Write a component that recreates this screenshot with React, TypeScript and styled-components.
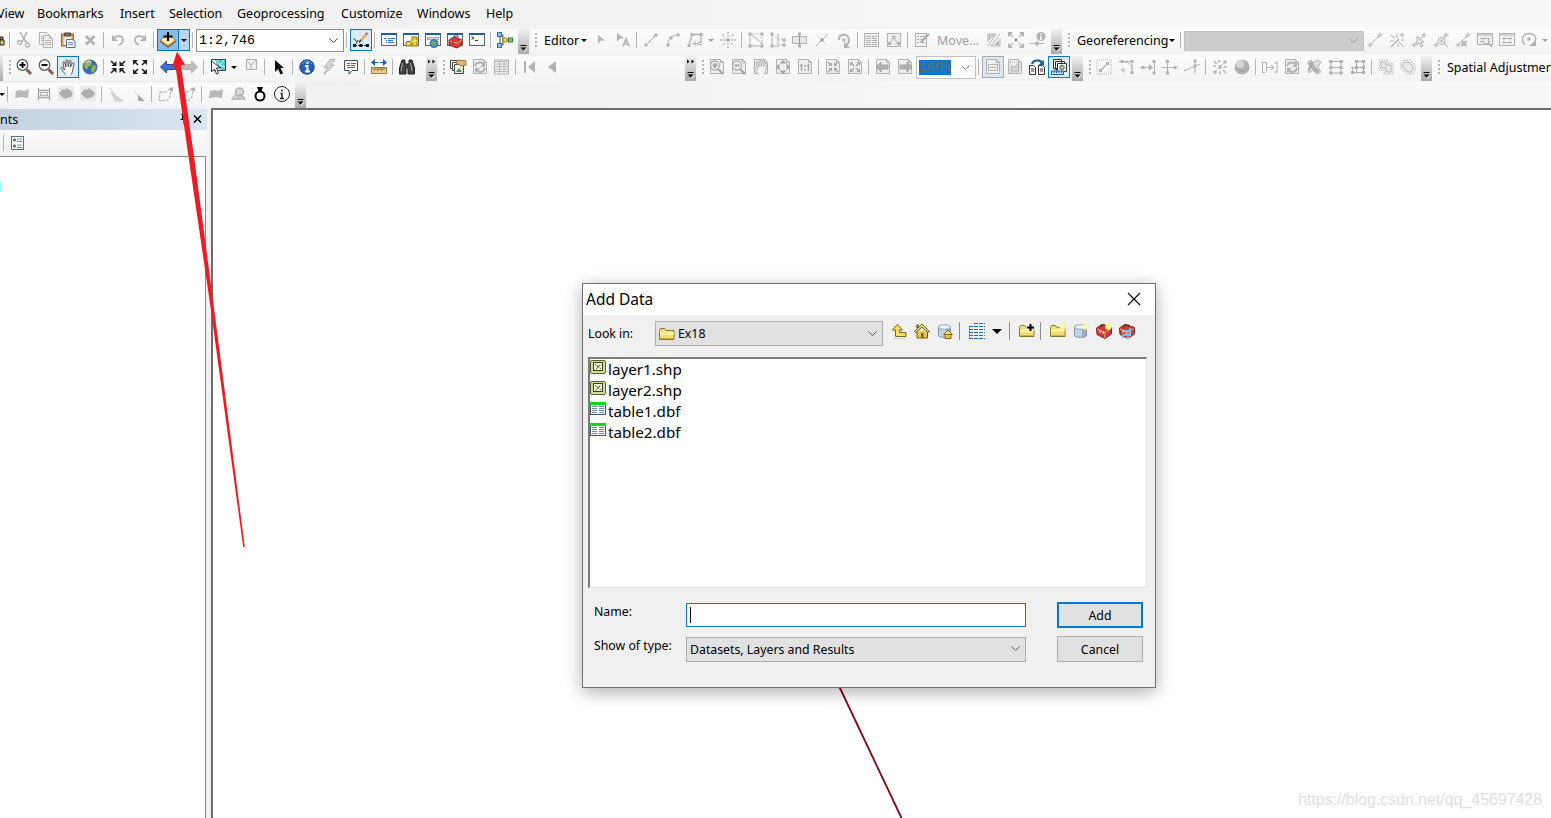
import React from 'react';
import styled, { createGlobalStyle, css } from 'styled-components';

const GlobalStyle = createGlobalStyle`
  * { box-sizing: border-box; }
  html, body { margin: 0; padding: 0; overflow: hidden; }
  body { font-family: "Noto Sans", "Open Sans", sans-serif; font-size: 12.5px; color: #000; background: #fff; }
`;

/* ---------- icons ---------- */

const G = '#b2b2b2';
const L = '#d6d6d6';
const HAND = 'M5.500 15.500L1 9.500c-.600-1.500 1-1.800 1.700-.600L4.500 11 3 4c-.200-1.500 1.300-1.700 1.600-.300L6 8V2c0-1.600 1.700-1.600 1.800 0l.500 5.500 1.200-5.300c.300-1.400 1.800-1 1.700.400L10.500 8l2.100-3.800c.700-1.200 2-.400 1.500.800L12.500 12l-1 3.500';

const cross = (x: number, y: number, c = G) => <path d={`M${x - 2.5} ${y}h5M${x} ${y - 2.5}v5`} stroke={c} />;
const node = (x: number, y: number, c = G) => <rect x={x - 1.5} y={y - 1.5} width="3" height="3" fill={c} stroke="none" />;
const page = <path d="M1.5.5h10l3 3v11h-13zM11.500.500v3h3" fill="#efefef" stroke={G} />;
const windowFrame = (
  <>
    <rect x=".5" y="1.500" width="15" height="12" fill="#fff" stroke="#5a6470" />
    <path d="M0 2h16" stroke="#1b5cae" strokeWidth="2" />
  </>
);
const links = <path d="M3.5 12.5L12.5 3.5" stroke={G} />;
const cylinder = (
  <>
    <path d="M1.500 4v8.500c0 2.500 12 2.500 12 0V4" fill="#c3d3e8" stroke="#8093aa" />
    <path d="M9 6h4v7l-4 1z" fill="#7e95b5" stroke="none" opacity=".6" />
    <ellipse cx="7.500" cy="4" rx="6" ry="2.300" fill="#edf4fb" stroke="#8da1b8" />
  </>
);
const folder = (
  <>
    <path d="M.500 13.500v-9l1-2h4l1.500 2h8v9z" fill="#f2dc7c" stroke="#8f7724" />
    <path d="M1 7h14M1 8h14" stroke="#fff5b5" />
    <path d="M1 12.500h14" stroke="#d1b047" />
  </>
);
const spark = (
  <>
    <circle cx="12.500" cy="3.500" r="3.200" fill="#fff9a8" stroke="none" />
    <path d="M12.500 0v7M9 3.500h7M10 1l5 5M15 1l-5 5" stroke="#efe25a" strokeWidth=".7" />
    <circle cx="12.500" cy="3.500" r="1.500" fill="#fff" stroke="none" />
  </>
);
const toolbox = (
  <>
    <path d="M.500 5L6 1.500l9.500 3v6.500L9 15.500l-8-4z" fill="#cc3c30" stroke="#8a211a" />
    <path d="M1 6l8 3.500 6-4M9 9.500V15" stroke="#f29a8e" />
    <path d="M5 4V2h5v2" stroke="#5b2520" />
    <path d="M4 7v3M7 8v3" stroke="#fff" />
  </>
);

const icons: Record<string, React.ReactNode> = {
  cut: <><path d="M4 0l6 10M11 0L6 10" stroke={G} strokeWidth="1.500" /><circle cx="3.500" cy="10.500" r="2" stroke={G} strokeWidth="1.300" /><circle cx="11.500" cy="13" r="2" stroke={G} strokeWidth="1.300" /><path d="M9 9l3 2" stroke={G} strokeWidth="1.500" /></>,
  copy: <><path d="M1.500.500h7l3 3v9h-10z" fill="#f1f1f1" stroke={G} /><path d="M5.500 3.500h6l3 3v9h-9zM11.500 3.500v3h3" fill="#f1f1f1" stroke={G} /><path d="M7 8.500h6M7 10.500h6M7 12.500h6M3 4.500h2M3 6.500h2M3 8.500h2" stroke={G} /></>,
  paste: <><rect x="1.500" y="2" width="12" height="12" fill="#e39c3c" stroke="#a5641a" /><rect x="3.500" y="4" width="8" height="9" fill="#f7ead6" stroke="none" /><path d="M4.500 1h6v3h-6z" fill="#777" stroke="#444" /><path d="M6.500 7.500h6l2.500 2v6H6.500z" fill="#fff" stroke="#45719f" /><path d="M8 10.500h5M8 12.500h5" stroke="#5c96cf" /></>,
  del: <path d="M4 4l8.500 8.500M12.500 4L4 12.500" stroke={G} strokeWidth="2.600" />,
  undo: <><path d="M2.500 8C5 2.500 13 3 13 8c0 2-1 3.500-4 5" stroke={G} strokeWidth="1.700" /><path d="M2 3v6h6z" fill={G} stroke="none" /></>,
  redo: <><path d="M13.500 8C11 2.500 3 3 3 8c0 2 1 3.500 4 5" stroke={G} strokeWidth="1.700" /><path d="M14 3v6H8z" fill={G} stroke="none" /></>,
  addData: <><path d="M8 3l8 5-8 6-8-6z" fill="#ffdc8a" stroke="#b78235" /><path d="M0 8v2l8 6 8-6V8l-8 6z" fill="#8c6a43" stroke="none" /><path d="M2 8l6-4 6 4-6 4z" fill="#ffebb3" stroke="none" /><path d="M8 0v9M3.500 4.500h9" stroke="#000" strokeWidth="2.200" /></>,
  editTool: <><path d="M2 13.500h12" stroke="#222" strokeDasharray="2 1" /><path d="M.500 6.500l3 2.500M3 12l2-4" stroke="#222" />{node(1.500, 13.500, '#111')}{node(8, 13.500, '#111')}{node(14.500, 13.500, '#111')}<path d="M8 8.500l5-6" stroke="#e7ad52" strokeWidth="2.500" /><path d="M13 2.500L14.500.8" stroke="#d4655c" strokeWidth="2.500" /><path d="M6 10.500l2-2.500" stroke="#333" strokeWidth="1.500" /></>,
  toc: <>{windowFrame}<path d="M3 6.500h2M7 6.500h7M5 8.500h1M7 8.500h5M5 10.500h1M7 10.500h6" stroke="#2878d4" /></>,
  catalog: <>{windowFrame}<path d="M3 10l5-1v5H3zM9 5h5v9H9z" fill="#e7cb36" stroke="#8b7616" /><path d="M4 12c3 0 5-4 10-3" stroke="#fff5a0" /></>,
  searchWin: <>{windowFrame}<rect x="2.500" y="5.500" width="11" height="2" fill="#d9e1e8" stroke="#9cacba" /><circle cx="9" cy="11.500" r="4" fill="#4d91d1" stroke="#346596" /><path d="M7 9l4 1-1 3-3-1z" fill="#6bb54a" stroke="none" /></>,
  tools: <>{windowFrame}<path d="M2 8l5-3 8 3v5l-5 3-8-3z" fill="#cf4037" stroke="#8c201a" /><path d="M3 9l7 2.500L15 8" stroke="#f2a093" /><path d="M6 9v3M7 5V4h4v2" stroke="#444" /></>,
  python: <>{windowFrame}<path d="M2.500 4.500L5 6 2.500 7.500M6 8.500h3" stroke="#333" /></>,
  model: <><path d="M3 3v10M3 3h3v5h7M3 13h3V8" stroke="#555" /><rect x=".500" y=".500" width="4" height="4" fill="#7ec4ed" stroke="#2578a9" /><rect x=".500" y="11.500" width="4" height="4" fill="#7ec4ed" stroke="#2578a9" /><circle cx="8" cy="8" r="2.200" fill="#ffdd5b" stroke="#9b771f" /><rect x="11.500" y="6" width="4" height="4" fill="#73cf68" stroke="#2d7930" /></>,
  play: <path d="M5 3l7 5.500H8L5 12z" fill={G} stroke="none" />,
  playA: <><path d="M2 1l7 5.500H5L2 10z" fill={G} stroke="none" /><path d="M8 14.500L11 7l3 7.500M9 12h4" stroke={G} strokeWidth="1.600" /></>,
  line: <>{links}{node(3, 13)}{node(13, 3)}</>,
  arc: <><path d="M3 13c0-6 3-10 10-10" stroke={G} />{node(3, 13)}{node(6, 6)}{node(13, 3)}</>,
  trace: <><path d="M2 13.500L5 2.500h9v8h-3" stroke={G} strokeWidth="1.300" />{node(5, 2.500)}{node(14, 2.500)}{node(2, 13.500)}{cross(8, 11.500)}<path d="M10 12.500h5" stroke={G} /></>,
  point: <><path d="M8 0v5M8 11v5M0 8h5M11 8h5M2.500 2.500L5 5M11 11l2.500 2.500M13.500 2.500L11 5M5 11l-2.500 2.500" stroke={G} strokeWidth="1.300" strokeDasharray="2 1" />{node(8, 8, '#999')}</>,
  verts: <><path d="M2 2l12 9v3H2z" stroke={G} /><path d="M2 2h12v12" stroke={G} strokeDasharray="1 1" />{node(2, 2)}{node(14, 2)}{node(2, 14)}{node(14, 14)}</>,
  reshape: <><path d="M2 2l6 5h6v6H8" stroke={G} strokeDasharray="1 1" /><path d="M2 2v12h5M8 2v13" stroke={G} />{node(2, 2)}{node(2, 14)}{node(14, 8)}{node(14, 13)}</>,
  cutPoly: <><rect x=".500" y="4.500" width="14" height="7" fill="#e6e6e6" stroke={G} /><path d="M7.500 1v14" stroke="#999" />{node(7.500, 2)}{node(7.500, 14)}</>,
  split: <><path d="M2 14L14 2" stroke={G} /><path d="M3 3l10 10" stroke={L} strokeDasharray="2 1" />{node(8, 8, '#999')}</>,
  rotate: <><path d="M3 8c-1-7 10-7 10 0 0 3-2 5-4 6" stroke={G} strokeWidth="2" /><path d="M8 10v6h6z" fill={G} stroke="none" />{node(8, 8)}</>,
  attrs: <><rect x=".500" y="1.500" width="14" height="13" fill="#efefef" stroke={G} /><path d="M2 4.500h5M2 6.500h5M2 8.500h5M2 10.500h5M2 12.500h5M8 4.500h5M8 6.500h5M8 8.500h5M8 10.500h5M8 12.500h5" stroke={G} /></>,
  sketchProps: <><rect x="1.500" y="1.500" width="13" height="13" fill="#efefef" stroke={G} /><path d="M3.500 12l4-7 4.500 7" stroke={G} />{node(8, 5)}{node(3.500, 11.500)}{node(12.500, 11.500)}</>,
  create: <><rect x="1.500" y="1.500" width="11" height="13" fill="#efefef" stroke={G} /><path d="M3 4.500h2M6 4.500h5M3 7.500h2M6 7.500h5M3 10.500h2M6 10.500h5" stroke={G} /><path d="M7 10l8-8" stroke="#a6a6a6" strokeWidth="2" /></>,
  adjust: <><path d="M2 10V2h8L2 14M14 6v8H5L14 2" stroke={G} /><path d="M3 3h5L3 8z" fill={L} stroke={G} /><path d="M13 8v5H8z" fill={G} stroke="none" /></>,
  expand: <><path d="M1 1l4 4M15 1l-4 4M1 15l4-4M15 15l-4-4" stroke={G} strokeWidth="1.300" /><path d="M0 5V0h5zM11 0h5v5zM16 11v5h-5zM5 16H0v-5z" fill={G} />{node(8, 8, '#999')}</>,
  infoNode: <><path d="M0 11.500h14M7 9v6" stroke={G} />{node(7, 11.500)}<circle cx="11" cy="4.500" r="4.500" fill={G} stroke="none" /><path d="M11 1.500V3M11 4v4" stroke="#fff" strokeWidth="1.500" /></>,
  zoomIn: <><circle cx="6.500" cy="6" r="5.300" fill="#f6fafc" stroke="#555" strokeWidth="1.200" /><path d="M3.500 6h6M6.500 3v6" stroke="#111" strokeWidth="2" /><path d="M10.500 10.500l4.500 4.500" stroke="#93544c" strokeWidth="2.800" /></>,
  zoomOut: <><circle cx="6.500" cy="6" r="5.300" fill="#f6fafc" stroke="#555" strokeWidth="1.200" /><path d="M3.500 6h6" stroke="#111" strokeWidth="2" /><path d="M10.500 10.500l4.500 4.500" stroke="#93544c" strokeWidth="2.800" /></>,
  hand: <path d={HAND} fill="#fff" stroke="#444" strokeWidth=".9" />,
  globe: <><circle cx="8" cy="8" r="7" fill="#2f6fbd" stroke="#44688e" /><path d="M3 3l4-2 3 2-1 4-3 1-1 3-3-3zM11 6l3 1-1 5-3 2-1-4z" fill="#98b443" stroke="none" /><path d="M4 4c1-2 4-2 5-1" stroke="#e0f0f8" /></>,
  fixedIn: <><path d="M1 2l3 3M15 2l-3 3M1 14l3-3M15 14l-3-3" stroke="#222" strokeWidth="1.600" /><path d="M6.500 2v5h-5zM9.500 2v5h5zM6.500 14V9h-5zM9.500 14V9h5z" fill="#222" stroke="none" /></>,
  fixedOut: <><path d="M3 3l3 3M13 3l-3 3M3 13l3-3M13 13l-3-3" stroke="#222" strokeWidth="1.600" /><path d="M1 6V1h5zM15 6V1h-5zM1 10v5h5zM15 10v5h-5z" fill="#222" stroke="none" /></>,
  back: <path d="M.5 8l6-6v3.500h9v5h-9V14z" fill="#3d74d2" stroke="#2449a1" />,
  forward: <path d="M15.500 8l-6-6v3.500h-9v5h9V14z" fill="#bdbdbd" stroke="#b0b0b0" />,
  selectF: <><rect x="1.500" y=".500" width="14" height="11" fill="#fff" stroke="#444" /><path d="M5 1h10v10h-4L7 6z" fill="#49cae0" stroke="none" /><path d="M7 1l3 5 5 2M10 6l4-5" stroke="#fff" /><path d="M1.500 2v11l3-3 2 5 2-1-2-5h4z" fill="#fff" stroke="#333" /></>,
  clearF: <><rect x="3.500" y=".500" width="10" height="10" fill="#eee" stroke={G} /><path d="M4 2l4 4 5-5M8 6v4" stroke={G} /></>,
  pointer: <path d="M4 1v12l3-3 2.500 5.500 2.500-1L9.500 9H13z" fill="#111" stroke="none" />,
  info: <><circle cx="8" cy="8" r="7.200" fill="#2462b4" stroke="#183f80" /><path d="M3 5c2-4 8-4 10 0" stroke="#6aa0e2" /><path d="M8.500 3v2M6 7h2.500v5M6 12.500h5" stroke="#fff" strokeWidth="2" /></>,
  flash: <path d="M9 .500h5L9.500 6H13L3 15.500 6.500 8.500H3z" fill="#d5d5d5" stroke={G} />,
  popup: <><path d="M1.500 1.500h13v10H9L6 15v-3.500H1.500z" fill="#fff" stroke="#45545c" /><path d="M4 4.500h3M4 6.500h3M8 4.500h5M8 6.500h4M4 8.500h8" stroke="#267bc5" /></>,
  measure: <><path d="M1 3.500h6M9 3.500h6" stroke="#1f60b0" /><path d="M0 3.500L4 0v7zM16 3.500L12 0v7z" fill="#1f60b0" stroke="none" /><rect x=".500" y="8.500" width="15" height="6" fill="#edcc8f" stroke="#a57639" /><path d="M3 9v3M5 9v2M7 9v3M9 9v2M11 9v3M13 9v2" stroke="#89602b" /></>,
  find: <><path d="M3 1h3v4h4V1h3l2.500 8v6H9V9H7v6H.5V9z" fill="#444" stroke="#222" /><path d="M3.500 4L2 12M11.500 4l1.500 8" stroke="#aaa" /></>,
  stack: <><path d="M.500 1.500h8v8h-8z" fill="#fff" stroke="#444" /><path d="M2.500 3.500h9v8h-9z" fill="#fff" stroke="#444" /><path d="M4.500 5.500h9v9h-9z" fill="#ecf6e4" stroke="#444" /><path d="M6 13l3-4 3 4z" fill="#578b45" stroke="none" /><path d="M6 2.500L9 1l7 1v4l-4 1-5-2z" fill="#e4b66b" stroke="#967443" /></>,
  refresh: <>{page}<path d="M3 7c1-4 7-5 9-1M13 9c-1 5-7 5-9 1" stroke={G} strokeWidth="2" /><path d="M13 3v5H8zM3 14V9h5z" fill={G} stroke="none" /></>,
  table: <><rect x=".500" y="1" width="14" height="14" fill="#f2f2f2" stroke={G} /><path d="M1 2.500h13M1 5h13M1 7.500h13M1 10h13M1 12.500h13M5.500 2v12M10 2v12" stroke={G} strokeWidth=".9" /></>,
  first: <><path d="M3 2v12" stroke={G} strokeWidth="2" /><path d="M13 2v12L6 8z" fill={G} stroke="none" /></>,
  prev: <path d="M12 2v12L4 8z" fill={G} stroke="none" />,
  pageIn: <>{page}<circle cx="6" cy="6.500" r="4.500" fill="#eee" stroke={G} strokeWidth="1.300" /><path d="M3.500 6.500h5M6 4v5M9 10l5 5" stroke="#a2a2a2" strokeWidth="1.900" /></>,
  pageOut: <>{page}<circle cx="6" cy="6.500" r="4.500" fill="#eee" stroke={G} strokeWidth="1.300" /><path d="M3.500 6.500h5M9 10l5 5" stroke="#a2a2a2" strokeWidth="1.900" /></>,
  pageHand: <>{page}<path d={HAND} fill="#f3f3f3" stroke={G} /></>,
  pageFull: <>{page}<path d="M8 1l3.500 3.500h-7zM8 15l3.500-3.500h-7zM1 8l3.500-3.500v7zM15 8l-3.500-3.500v7z" fill="#a4a4a4" stroke="none" /></>,
  page11: <>{page}<path d="M4.500 5v7M11.500 5v7M3 6.500l1.500-1M10 6.500l1.500-1" stroke="#a4a4a4" strokeWidth="1.500" /><path d="M8 6v2M8 10v2" stroke="#a4a4a4" strokeWidth="1.500" /></>,
  pageFixIn: <>{page}<path d="M3 3l3 3M13 3l-3 3M3 13l3-3M13 13l-3-3" stroke="#a4a4a4" strokeWidth="1.300" /><path d="M7 3.500V7H3.500zM9 3.500V7h3.500zM7 12.500V9H3.500zM9 12.500V9h3.500z" fill="#a4a4a4" stroke="none" /></>,
  pageFixOut: <>{page}<path d="M4 4l3 3M12 4L9 7M4 12l3-3M12 12L9 9" stroke="#a4a4a4" strokeWidth="1.300" /><path d="M3 7V3.500h3.500zM13 7V3.500H9.500zM3 9.500V13h3.500zM13 9.500V13H9.500z" fill="#a4a4a4" stroke="none" /></>,
  pageBack: <>{page}<path d="M1 8l5-5v3h7v4H6v3z" fill={G} stroke="#a4a4a4" /></>,
  pageFwd: <>{page}<path d="M15 8l-5-5v3H3v4h7v3z" fill={G} stroke="#a4a4a4" /></>,
  draft: <>{page}<rect x="3.500" y="5.500" width="9" height="6" stroke={G} /><path d="M5 8.500h6" stroke={G} /></>,
  focus: <>{page}<path d="M3 3h10M3 13h10M3 3v10M13 3v10" stroke={G} strokeDasharray="1 1" /><path d="M4.500 12V7l3 1 4-4v8z" fill={L} stroke={G} /></>,
  change: <><path d="M.500 6.500h4l2 2v7h-6zM9.500 6.500h4l2 2v7h-6z" fill="#fff" stroke="#333" /><path d="M2 10h3M2 12h3M11 10h3M11 12h3" stroke="#333" /><path d="M3 5c1-4 8-5 10-1" stroke="#1d63a4" strokeWidth="2.200" /><path d="M15 1v5.500H9z" fill="#1d63a4" stroke="none" /></>,
  ddp: <><path d="M2.500.500h8v9h-8zM4.500 2.500h9v8h-9z" fill="#fff" stroke="#333" /><path d="M6.500 4.500h9v8h-9z" fill="#fff" stroke="#333" /><circle cx="11" cy="8.500" r="2.300" fill="#a4c88d" stroke="#526f45" /><path d="M.500 12h12v3.500H.500z" fill="#d2e9ff" stroke="#1c5ca3" /><path d="M3 12v2M5.500 12v2M8 12v2M10.500 12v2" stroke="#1c5ca3" /></>,
  geo1: <>{links}{cross(3, 13)}{cross(13, 3)}</>,
  geo2: <>{cross(13, 3)}<path d="M2 15l8-8" stroke={G} strokeWidth="1.500" /><path d="M8 2v4M2 3l4 4M1 9h4M10 10l5 5M9 11v4M12 8h3" stroke={G} /></>,
  geo3: <>{links}{cross(3, 13)}{cross(13, 3)}<path d="M6 4v9l2-2 2 4 2-1-2-4h3z" fill="#e4e4e4" stroke={G} /></>,
  geo4: <>{links}{cross(3, 13)}{cross(13, 3)}<circle cx="8.500" cy="9" r="3.500" fill="#eee" stroke={G} /><path d="M7 9h3M8.500 7.500v3M11 11l4 4" stroke={G} /></>,
  geo5: <>{links}{cross(3, 13)}{cross(13, 3)}<path d="M6.500 9l5 5M11.500 9l-5 5" stroke={G} strokeWidth="2" /></>,
  geo6: <><rect x=".500" y="1.500" width="15" height="11" fill="#eee" stroke={G} /><path d="M1 3h14M3 6.500h10M3 9.500h10" stroke={G} /><circle cx="9" cy="9" r="3" fill="#eee" stroke={G} /><path d="M11 11l4 4" stroke={G} strokeWidth="1.700" /></>,
  geo7: <><rect x=".500" y="1.500" width="15" height="12" fill="#f4f4f4" stroke={G} /><path d="M1 3h14M3 6.500h10M3 10.500h10M5 5v3M11 5v3M5 9v3M11 9v3" stroke={G} /></>,
  geo8: <><path d="M4 13C-1 8 2 1.500 8 1.500s9 6 4 10.500" stroke={G} strokeWidth="1.500" /><path d="M8 14h7V8z" fill={G} stroke="none" />{node(8, 7)}</>,
  sa1: <><rect x="1" y="1" width="14" height="14" stroke={G} strokeDasharray="1 1" /><path d="M5 11l6-6" stroke={G} strokeWidth="1.300" />{node(4.500, 11.500)}{node(11.500, 4.500)}</>,
  sa2: <><path d="M1 2.500h13v11M4 2.500c6 0 10 3 10 8" stroke={G} />{node(4, 2.500)}{node(14, 2.500)}{node(14, 13.500)}{cross(5, 11)}</>,
  sa3: <><path d="M0 8.500h12M14.500 2v12" stroke={G} /><path d="M9 5l4 3.500L9 12z" fill={G} stroke="none" />{node(3, 8.500)}{node(14, 2.500)}{node(14, 14)}</>,
  sa4: <><path d="M0 8.500h7M9 8.500h7" stroke={G} strokeDasharray="2 1" /><path d="M5.500 1v14M2 8.500h7" stroke={G} />{node(5.500, 2.500)}{node(5.500, 14)}{node(13, 8.500)}</>,
  sa5: <><path d="M0 12l16-7M11 1v14" stroke={G} />{node(11, 7)}{node(11, 2)}</>,
  sa6: <><path d="M3 13L13 3" stroke={G} strokeDasharray="3 1" /><path d="M2 2l3 3M7 1v3M1 7h3M11 11l3 3M8 12v3M12 8h3" stroke={G} strokeWidth="1.500" />{node(3, 13)}{node(8, 8)}{node(13, 3)}</>,
  ball: <><circle cx="8" cy="8" r="7.500" fill={G} stroke="none" /><circle cx="6" cy="5" r="4" fill="#d5d5d5" stroke="none" /><path d="M2 9c4 4 9 4 13 0" stroke="#999" /></>,
  sa7: <path d="M.500 13V3.500h4v9M0 13.500h3M6 8.500h5M9 6l3 2.500L9 11M15 2v12M12 4h3M12 13h3" stroke={G} />,
  sa8: <><path d="M2 3l3-2 2 3 4-3 4 2-3 5 3 5-4 2-4-4-4 3-1-4 2-3z" fill="#dedede" stroke={G} /><path d="M2 4l9 10M4 3l9 10M7 3l-4 8" stroke="#a1a1a1" strokeWidth="1.500" /></>,
  sa9: <><path d="M3 2v12M13 2v12M1 2.500h14M1 8.500h14M1 14h14" stroke={G} />{node(3, 2.500)}{node(13, 2.500)}{node(3, 8.500)}{node(13, 8.500)}{node(3, 14)}{node(13, 14)}</>,
  sa10: <><path d="M6.500 2v13M13.500 2v13M1 8.500h14M1 13.500h14M6 2.500h8M2.500 8v6" stroke={G} />{node(6.500, 2.500)}{node(13.500, 2.500)}{node(6.500, 8.500)}{node(13.500, 8.500)}{node(2.500, 13.500)}{node(13.500, 13.500)}</>,
  union: <><path d="M1 1h9v3h5v11H6v-4H1z" stroke={G} strokeDasharray="1.500 1" /><path d="M3 3h5v3h5v7H8V9H3z" fill="#eaeaea" stroke={G} /></>,
  buffer: <><path d="M4 1h6l5 5v6l-3 3H7L1 10V4z" stroke={G} strokeDasharray="1.500 1" /><path d="M5 3h4l4 4v4l-2 2H8L3 9V5z" fill="#e8e8e8" stroke={G} /></>,
  blob: <path d="M2 5l5-1 3 1 5-2-1 9-6-1-7 1z" fill="#b8b8b8" stroke="none" />,
  ladder: <><path d="M2.500 2v12M13.500 2v12M2 4.500h12M2 11.500h12" stroke="#a6a6a6" strokeWidth="1.300" /><rect x="4.500" y="6.500" width="7" height="3" fill="#eee" stroke={G} /></>,
  disc: <><rect x="0" y="0" width="16" height="15" fill="#eaeaea" stroke="none" /><path d="M1 7.500l3-4h4V2l4 2 3 3-2 4-4 1-1 1-4-2z" fill="#b0b0b0" stroke="none" /></>,
  tri1: <><path d="M3 6l12 9H7z" fill={L} stroke={G} strokeWidth=".5" /><path d="M1 2l7 7" stroke={L} /></>,
  tri2: <path d="M1 2l14 13H8V9z" fill="#aaa" stroke="none" />,
  poly1: <><path d="M2 6h6l5-4-1 9-3 3.500H1.500z" stroke="#a9a9a9" strokeDasharray="3 1" /><path d="M15 1v5l-5-3z" fill={G} stroke="none" /></>,
  loupe: <><path d="M1 13h11M5 9l-3 4h10z" fill={L} stroke={G} /><circle cx="9.500" cy="6" r="4" fill={L} stroke={G} strokeWidth="1.500" /><path d="M10 8l5 6" stroke={G} strokeWidth="2" /></>,
  ring: <><circle cx="8" cy="10" r="4.500" stroke="#000" strokeWidth="2" /><path d="M5 1h6L9.500 5h-3z" fill="#000" stroke="none" /></>,
  infoO: <><circle cx="8" cy="8" r="7.500" fill="#fff" stroke="#223" /><path d="M8 3.500v2M6.500 7.500H8v5M6 12.500h4" stroke="#223" strokeWidth="1.500" /></>,
  options: <><rect x="1.500" y="1.500" width="12" height="13" fill="#fff" stroke="#53708d" /><circle cx="4.500" cy="5" r="1" stroke="#222" /><circle cx="4.500" cy="11" r="1" stroke="#222" /><path d="M7 4h5M7 6.500h5M7 10h5M7 12.500h5" stroke="#6e8fae" /></>,
  sliver: <g transform="translate(4 0)"><path d="M0 5h3v3H0z" fill="#82995b" stroke="#222" /><path d="M0 8h4v5H0z" fill="#dfc26e" stroke="#222" /></g>,
  up: <><path d="M6.500 1.500L1.500 7h3v6.500H15v-4H8.500V7h3z" fill="#f3de63" stroke="#7a6512" /><path d="M3 15.500h12" stroke="#d3d3d3" /></>,
  home: <><path d="M3 8v7h10.500V8" fill="#e6c84c" stroke="#705a18" /><path d="M3.500 5V1.500" stroke="#75551c" strokeWidth="2.200" /><path d="M.500 8.500L8 1l7.500 7.500-1.500 1-6-5.500-6 5.500z" fill="#f3dd70" stroke="#705a18" /><path d="M7 10h2.500v5H7z" fill="#806624" stroke="none" /></>,
  homeDb: <>{cylinder}<path d="M8 11v4.500h6V11" fill="#e7c64a" stroke="#8a681c" /><path d="M6.500 11.500L11 7l4.500 4.500z" fill="#f5da66" stroke="#8a681c" /></>,
  list: <><path d="M5 .500h11M0 3.500h16M0 6.500h16M0 9.500h16M0 12.500h16M0 15.500h16" stroke="#1769bd" strokeDasharray="4 1" /><path d="M0 5h1M0 8h1M0 11h1M0 14h1" stroke="#222" /></>,
  connect: <>{folder}<path d="M7 0h9v7H7z" fill="#f0f0f0" opacity=".7" /><path d="M11.500 1v7M8 4.500h7" stroke="#000" strokeWidth="2" /></>,
  folder,
  newFolder: <>{folder}{spark}</>,
  newDb: <>{cylinder}{spark}</>,
  newTbx: <>{toolbox}{spark}</>,
  pyTbx: <>{toolbox}<path d="M5 8h6V5M4 15v-3h7V8M7 15h4" stroke="#78bcf0" strokeWidth="2.200" /></>,
  shp: <><rect x=".500" y=".500" width="15" height="13" rx="1.500" fill="#cedf97" stroke="#55652e" /><rect x="3.500" y="2.500" width="9" height="8" fill="#f5f7dc" stroke="#38401f" /><path d="M5 4.500l3 2 3-2M8 6.500l-2 3M8 6.500l3 2.500" stroke="#38401f" strokeDasharray="1.500 .7" /></>,
  dbf: <><rect x=".500" y=".500" width="15" height="12" fill="#fff" stroke="#3e5a68" /><path d="M0 1.500h16" stroke="#05dd18" strokeWidth="3" /><path d="M2 4.500h5M2 6.500h5M2 8.500h5M2 10.500h5M9 4.500h5M9 6.500h5M9 8.500h5M9 10.500h5" stroke="#6b8aa5" /></>,
};

const Glyph = styled.svg`
  width: 16px;
  height: 16px;
  flex: none;
  display: block;
  overflow: visible;
`;
const Icon = ({ name }: { name: string }) => (
  <Glyph viewBox="0 0 16 16" fill="none">{icons[name]}</Glyph>
);

/* ---------- window chrome ---------- */

const Screen = styled.div`
  position: relative;
  width: 1551px;
  height: 818px;
  overflow: hidden;
  display: flex;
  flex-direction: column;
  background: linear-gradient(90deg, #f0f0f0 0, #f2f2f2 600px, #f8f8f8 1100px);
`;
const MenuBar = styled.nav`
  height: 28px;
  display: flex;
  margin-left: -3px;
  padding-bottom: 1px;
`;
const MenuItem = styled.span<{ $w: number }>`
  width: ${p => p.$w}px;
  flex: none;
  line-height: 27px;
  white-space: nowrap;
`;
const ToolRow = styled.div`
  height: 27px;
  display: flex;
  padding-top: 1px;
`;
const Toolbar = styled.div<{ $w?: number }>`
  height: 25px;
  display: flex;
  align-items: center;
  flex: none;
  margin-right: 2px;
  padding-bottom: 3px;
  border-radius: 3px 0 0 3px;
  background: linear-gradient(#fcfcfc, #f3f3f3);
  ${p => p.$w && css`width: ${p.$w}px;`}
`;
const Slot = styled.span<{ $w?: number; $on?: 'light' | 'dim' }>`
  width: ${p => p.$w ?? 22}px;
  height: 22px;
  flex: none;
  display: flex;
  align-items: center;
  justify-content: center;
  ${p => p.$on === 'light' && css`background: #dcebf8; border: 1px solid #0078d7;`}
  ${p => p.$on === 'dim' && css`background: #dfe7ee; border: 1px solid #a0adb8;`}
`;
const EdgeOverflow = styled.i`
  width: 3px;
  height: 25px;
  flex: none;
  align-self: flex-start;
  background: linear-gradient(#ededed, #a9a9a9);
`;
const Separator = styled.i`
  width: 1px;
  height: 16px;
  margin: 0 3px 0 2px;
  flex: none;
  background: #b5b5b5;
`;
const Grip = styled.i<{ $w?: number; $x?: number }>`
  width: ${p => p.$w ?? 8}px;
  height: 14px;
  flex: none;
  background: repeating-linear-gradient(#b4b4b4 0 2px, transparent 2px 4px) ${p => p.$x ?? 4}px 0 / 2px 100% no-repeat;
`;
const Caret = styled.i<{ $dim?: boolean; $w?: number }>`
  width: ${p => p.$w ?? 11}px;
  flex: none;
  display: flex;
  justify-content: center;
  &::after {
    content: '';
    margin-left: -1px;
    border: solid transparent;
    border-width: 3px 3px 0;
    border-top-color: ${p => (p.$dim ? '#a0a0a0' : '#000')};
  }
`;
const OverflowBox = styled.span`
  width: 11px;
  height: 25px;
  flex: none;
  align-self: flex-start;
  margin-left: auto;
  background: linear-gradient(#f0f0f0, #a9a9a9);
  svg { display: block; }
`;
const Overflow = ({ more }: { more?: boolean }) => (
  <OverflowBox>
    <svg width="11" height="25" viewBox="0 0 11 25">
      {more && <path d="M2 3.500l2.500 2L2 7.500zM6.500 3.500l2.500 2-2.500 2z" />}
      <path d="M2.500 16.500h6" stroke="#000" />
      <path d="M2.500 18.500h6l-3 3z" />
      <path d="M6 22l3-3v1l-3 3z" fill="#fff" />
    </svg>
  </OverflowBox>
);
const SplitButton = styled.span`
  width: 33px;
  height: 22px;
  flex: none;
  display: flex;
  align-items: center;
  border: 1px solid #0078d7;
  background: #85bce9;
`;
const SplitArrow = styled.span`
  align-self: stretch;
  display: flex;
  align-items: center;
  border-left: 1px solid #0078d7;
  background: #b3d7f3;
`;
const Combo = styled.span<{ $w: number; $tone?: 'pale' | 'dim' }>`
  width: ${p => p.$w}px;
  height: ${p => (p.$tone === 'dim' ? 20 : 23)}px;
  margin-bottom: -1px;
  flex: none;
  display: flex;
  align-items: center;
  padding: 0 5px 0 2px;
  border: 1px solid ${p => (p.$tone ? '#c3c3c3' : '#8d8d8d')};
  background: ${p => (p.$tone === 'dim' ? '#cccccc' : '#fff')};
  font: 13.33px/15px "Liberation Mono", monospace;
`;
const Selected = styled.span`
  background: #0078d7;
  color: #7b6a58;
`;
const ChevronGlyph = styled.svg`
  width: 9px;
  height: 6px;
  margin-left: auto;
`;
const Chevron = ({ c = '#555' }: { c?: string }) => (
  <ChevronGlyph viewBox="0 0 9 6">
    <path d="M.5.5l4 4 4-4" fill="none" stroke={c} />
  </ChevronGlyph>
);
const ToolText = styled.span<{ $w: number; $dim?: boolean }>`
  width: ${p => p.$w}px;
  flex: none;
  white-space: nowrap;
  padding-left: ${p => (p.$dim ? 4 : 0)}px;
  color: ${p => (p.$dim ? '#a0a0a0' : '#000')};
`;

const Tools = ({ names }: { names: string }) => (
  <>
    {names.split(' ').map((n, i) => {
      if (n === '|') return <Separator key={i} />;
      if (n === 'v' || n === 'w') return <Caret key={i} $dim={n === 'w'} />;
      return <Slot key={i}><Icon name={n} /></Slot>;
    })}
  </>
);

/* ---------- workspace ---------- */

const Workspace = styled.main`
  flex: 1;
  display: flex;
  min-height: 0;
`;
const Contents = styled.aside`
  width: 207px;
  margin-right: 4px;
  display: flex;
  flex-direction: column;
`;
const ContentsTitle = styled.header`
  height: 21px;
  display: flex;
  align-items: center;
  justify-content: space-between;
  padding-right: 4px;
  background: linear-gradient(90deg, #c4d2df, #d9e5f2);
`;
const TitleText = styled.span`
  margin-left: -7px;
`;
const ContentsTools = styled.div`
  height: 26px;
  display: flex;
  align-items: center;
  padding-left: 1px;
  background: linear-gradient(#fafafa, #f1f1f1);
`;
const Tree = styled.div`
  flex: 1;
  padding-top: 25px;
  border: solid #888;
  border-width: 1px 1px 0 0;
  margin-right: 1px;
  background: #fff;
`;
const LayerMark = styled.i`
  display: block;
  width: 1px;
  height: 10px;
  background: #8ff;
`;
const MapView = styled.section`
  position: relative;
  flex: 1;
  margin-top: -1px;
  border: solid #6d6d6d;
  border-width: 2px 0 0 2px;
  background: #fff;
`;
const Overlay = styled.svg`
  position: absolute;
  left: 0;
  top: 0;
  width: 1551px;
  height: 818px;
`;
const Watermark = styled.span`
  position: absolute;
  right: 9px;
  bottom: 9px;
  font: 15.9px/19px "Liberation Sans", sans-serif;
  color: #dedede;
`;

/* ---------- dialog ---------- */

const Dialog = styled.section`
  position: absolute;
  left: 582px;
  top: 283px;
  width: 574px;
  height: 405px;
  display: flex;
  flex-direction: column;
  border: 1px solid #707070;
  background: #f0f0f0;
  box-shadow: 0 4px 16px rgba(0, 0, 0, .32);
  font-size: 12.3px;
`;
const DialogTitle = styled.header`
  height: 31px;
  display: flex;
  align-items: center;
  justify-content: space-between;
  padding: 0 14px 2px 3px;
  background: #fff;
  font-size: 15.5px;
`;
const LookRow = styled.div`
  height: 42px;
  display: flex;
  padding: 6px 0 0 5px;
`;
const Label = styled.label<{ $w: number; $top: number }>`
  width: ${p => p.$w}px;
  padding-top: ${p => p.$top}px;
  flex: none;
  align-self: start;
  line-height: 17px;
  white-space: nowrap;
`;
const Select = styled.span<{ $w: number }>`
  width: ${p => p.$w}px;
  height: 25px;
  flex: none;
  display: flex;
  align-items: center;
  gap: 3px;
  padding: 0 5px 0 3px;
  border: 1px solid #adadad;
  background: #e1e1e1;
`;
const DialogTools = styled.div`
  height: 22px;
  display: flex;
  align-items: center;
  margin: -1px 0 0 4px;
`;
const DialogSep = styled.i<{ $l: number }>`
  width: 1px;
  height: 18px;
  flex: none;
  margin: 0 5px 0 ${p => p.$l}px;
  background: #8d8d8d;
`;
const BigCaret = styled.i`
  margin-left: 4px;
  border: solid transparent;
  border-width: 5px 5px 0;
  border-top-color: #000;
`;
const FileList = styled.ul`
  width: 559px;
  height: 231px;
  margin: 0 0 0 5px;
  padding: 0;
  list-style: none;
  background: #fff;
  border: solid;
  border-width: 2px 1px 1px 2px;
  border-color: #7a7a7a #e3e3e3 #e3e3e3 #7a7a7a;
  font-size: 15.2px;
`;
const FileRow = styled.li`
  height: 21px;
  display: flex;
  align-items: flex-start;
  gap: 2px;
  line-height: 20px;
  svg { margin-top: 1px; }
`;
const Form = styled.div`
  display: grid;
  grid-template-columns: 92px 340px 31px 86px;
  grid-template-rows: 26px 26px;
  row-gap: 8px;
  align-items: center;
  padding: 14px 0 0 11px;
`;
const NameInput = styled.span`
  height: 24px;
  padding: 3px 0 0 3px;
  border: 1px solid #0078d7;
  background: #fff;
  &::before {
    content: '';
    display: block;
    width: 1px;
    height: 16px;
    background: #000;
  }
`;
const Button = styled.button<{ $primary?: boolean }>`
  grid-column: 4;
  height: 26px;
  padding: 0;
  border: ${p => (p.$primary ? '2px solid #0078d7' : '1px solid #adadad')};
  background: #e1e1e1;
  font: inherit;
`;

const menu: [string, number][] = [
  ['View', 40], ['Bookmarks', 83], ['Insert', 49], ['Selection', 68], ['Geoprocessing', 104],
  ['Customize', 76], ['Windows', 69], ['Help', 40],
];
const files = [['shp', 'layer1.shp'], ['shp', 'layer2.shp'], ['dbf', 'table1.dbf'], ['dbf', 'table2.dbf']];

export default function App() {
  return (
    <Screen>
      <GlobalStyle />
      <MenuBar>
        {menu.map(([t, w]) => <MenuItem key={t} $w={w}>{t}</MenuItem>)}
      </MenuBar>

      <ToolRow>
        <Toolbar $w={529}>
          <Slot $w={7}><Icon name="sliver" /></Slot>
          <Separator />
          <Tools names="cut copy paste del | undo redo |" />
          <SplitButton>
            <Slot $w={20}><Icon name="addData" /></Slot>
            <SplitArrow><Caret $w={10} /></SplitArrow>
          </SplitButton>
          <Separator />
          <Combo $w={148}>1:2,746<Chevron /></Combo>
          <Separator />
          <Slot $on="light"><Icon name="editTool" /></Slot>
          <Tools names="| toc catalog searchWin tools python | model" />
          <Overflow />
        </Toolbar>
        <Toolbar $w={531}>
          <Grip $w={13} />
          <ToolText $w={35}>Editor</ToolText>
          <Caret />
          <Tools names="play playA | line arc trace w point | verts reshape cutPoly split rotate | attrs sketchProps | create" />
          <ToolText $w={50} $dim>Move...</ToolText>
          <Tools names="adjust expand infoNode" />
          <Overflow />
        </Toolbar>
        <Toolbar $w={487}>
          <Grip $w={13} />
          <ToolText $w={90}>Georeferencing</ToolText>
          <Caret />
          <Separator />
          <Combo $w={180} $tone="dim"><Chevron c="#999" /></Combo>
          <Tools names="geo1 geo2 geo3 geo4 geo5 geo6 geo7 geo8 w" />
        </Toolbar>
      </ToolRow>

      <ToolRow>
        <Toolbar $w={437}>
          <EdgeOverflow />
          <Grip $w={10} $x={6} />
          <Tools names="zoomIn zoomOut" />
          <Slot $on="light"><Icon name="hand" /></Slot>
          <Tools names="globe | fixedIn fixedOut | back forward | selectF v clearF | pointer | info flash popup | measure | find" />
          <Overflow more />
        </Toolbar>
        <Toolbar $w={257}>
          <Grip />
          <Tools names="stack refresh table | first prev" />
          <Overflow more />
        </Toolbar>
        <Toolbar $w={385}>
          <Grip />
          <Tools names="pageIn pageOut pageHand pageFull page11 | pageFixIn pageFixOut | pageBack pageFwd" />
          <Combo $w={60} $tone="pale"><Selected>100%</Selected><Chevron c="#888" /></Combo>
          <Separator />
          <Slot $on="dim"><Icon name="draft" /></Slot>
          <Tools names="focus change" />
          <Slot $on="light"><Icon name="ddp" /></Slot>
          <Overflow />
        </Toolbar>
        <Toolbar $w={347}>
          <Grip />
          <Tools names="sa1 sa2 sa3 sa4 sa5 | sa6 ball | sa7 refresh sa8 sa9 sa10 | union buffer" />
          <Overflow />
        </Toolbar>
        <Toolbar $w={120}>
          <Grip $w={13} />
          <ToolText $w={104}>Spatial Adjustmen</ToolText>
        </Toolbar>
      </ToolRow>

      <ToolRow>
        <Toolbar $w={306}>
          <Caret $w={5} />
          <Tools names="| blob ladder disc disc | tri1 tri2 | poly1 poly1 | blob loupe ring infoO" />
          <Overflow />
        </Toolbar>
      </ToolRow>

      <Workspace>
        <Contents>
          <ContentsTitle>
            <TitleText>ents</TitleText>
            <svg width="24" height="14" viewBox="0 0 24 14" fill="none" stroke="#000">
              <path d="M2.500 1.500h5M3.500 1.500v5M6.500 1.500v5M1.500 6.500h7M5 7v4" />
              <path d="M15 2.500l7 7M22 2.500l-7 7" strokeWidth="1.500" />
            </svg>
          </ContentsTitle>
          <ContentsTools>
            <Separator />
            <Slot><Icon name="options" /></Slot>
          </ContentsTools>
          <Tree><LayerMark /></Tree>
        </Contents>
        <MapView>
          <Watermark>https://blog.csdn.net/qq_45697428</Watermark>
        </MapView>
      </Workspace>

      <Overlay viewBox="0 0 1551 818">
        <path d="M839 686L901.500 818" stroke="#7a0a14" strokeWidth="1.800" />
        <path d="M177 51.500L185 64.500 181 65.500 194.500 160 213 300 244.800 547H243.200L209.500 300 189 160 175.500 66.500 172 67z" fill="#ed1c24" />
      </Overlay>

      <Dialog>
        <DialogTitle>
          Add Data
          <svg width="14" height="14" viewBox="0 0 14 14"><path d="M1 1l12 12M13 1L1 13" stroke="#000" strokeWidth="1.100" /></svg>
        </DialogTitle>
        <LookRow>
          <Label $w={67} $top={4}>Look in:</Label>
          <Select $w={228}><Icon name="folder" />Ex18<Chevron /></Select>
          <DialogTools>
            <Slot $w={23}><Icon name="up" /></Slot>
            <Slot $w={23}><Icon name="home" /></Slot>
            <Slot $w={23}><Icon name="homeDb" /></Slot>
            <DialogSep $l={3} />
            <Slot $w={23}><Icon name="list" /></Slot>
            <BigCaret />
            <DialogSep $l={7} />
            <Slot $w={23}><Icon name="connect" /></Slot>
            <DialogSep $l={2} />
            <Slot $w={23}><Icon name="newFolder" /></Slot>
            <Slot $w={23}><Icon name="newDb" /></Slot>
            <Slot $w={23}><Icon name="newTbx" /></Slot>
            <Slot $w={23}><Icon name="pyTbx" /></Slot>
          </DialogTools>
        </LookRow>
        <FileList>
          {files.map(([icon, name]) => <FileRow key={name}><Icon name={icon} />{name}</FileRow>)}
        </FileList>
        <Form>
          <Label $w={92} $top={1}>Name:</Label>
          <NameInput />
          <Button $primary>Add</Button>
          <Label $w={92} $top={1}>Show of type:</Label>
          <Select $w={340}>Datasets, Layers and Results<Chevron /></Select>
          <Button>Cancel</Button>
        </Form>
      </Dialog>
    </Screen>
  );
}
